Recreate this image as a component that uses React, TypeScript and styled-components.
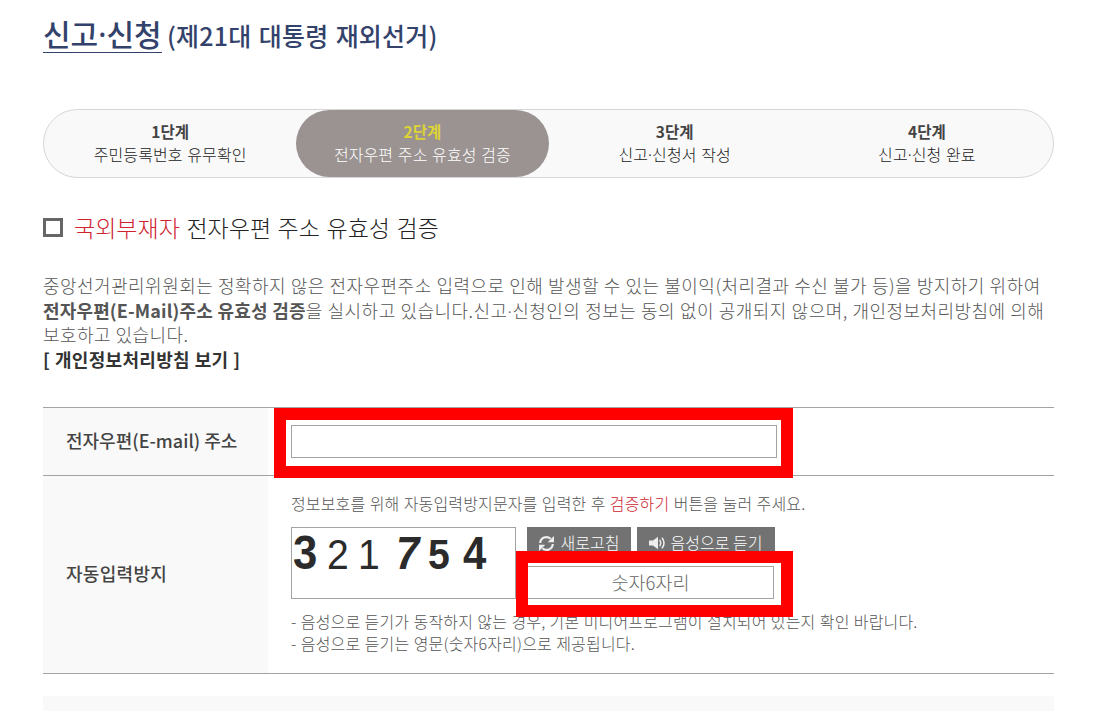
import React from "react";
import styled, { createGlobalStyle } from "styled-components";

const GlobalStyle = createGlobalStyle`
  * {
    box-sizing: border-box;
  }
  body {
    margin: 0;
    background: #fff;
    font-family: "Noto Sans CJK KR", sans-serif;
    overflow: hidden;
  }
`;

const Page = styled.main`
  width: 1095px;
  height: 711px;
  padding: 0 41px 0 43px;
  overflow: hidden;
`;

const Title = styled.h1`
  display: flex;
  align-items: baseline;
  gap: 5px;
  height: 53px;
  margin: 0;
  padding-top: 15px;
  color: #33426b;
  font-weight: 500;
  white-space: nowrap;
`;

const TitleMain = styled.span`
  width: 119px;
  height: 38px;
  border-bottom: 1px solid #33426b;
  font-size: 30px;
  line-height: 36px;
`;

const TitleSub = styled.span`
  font-size: 25px;
  line-height: 36px;
  letter-spacing: 0.2px;
  word-spacing: 1.5px;
`;

/* The middle dot is set narrower than the Korean font draws it */
const Dot = styled.span`
  font-family: "Noto Sans", sans-serif;
  line-height: 0;
`;

const Steps = styled.ol`
  display: flex;
  width: 1011px;
  height: 69px;
  margin: 56px 0 0;
  padding: 0;
  border: 1px solid #d6d6d6;
  border-radius: 35px;
  background: #f9f9f9;
  list-style: none;
`;

const Step = styled.li<{ $active?: boolean }>`
  flex: 1;
  padding-top: 10px;
  border-radius: 34px;
  background: ${(props) => (props.$active ? "#9a9392" : "transparent")};
  color: ${(props) => (props.$active ? "#fff" : "#222")};
  font-size: 16px;
  font-weight: 300;
  line-height: 23px;
  letter-spacing: 0.1px;
  word-spacing: 1px;
  text-align: center;
  white-space: nowrap;
`;

const StepName = styled.strong<{ $active?: boolean }>`
  display: block;
  color: ${(props) => (props.$active ? "#ddd335" : "#444")};
  font-size: 15.5px;
  font-weight: 700;
`;

const Heading = styled.h2`
  display: flex;
  align-items: center;
  height: 36px;
  margin: 31px 0 0;
  color: #222;
  font-size: 23px;
  font-weight: 300;
  line-height: 36px;
  word-spacing: 1.5px;
  white-space: pre;
`;

const Square = styled.span`
  width: 20px;
  height: 19px;
  margin: 1px 11px 0 0;
  border: 3px solid #666;
`;

const Red = styled.span`
  color: #d0232f;
`;

const Intro = styled.p`
  margin: 28px 0 0;
  color: #555;
  font-size: 18px;
  font-weight: 300;
  line-height: 24.6px;
  white-space: nowrap;
`;

const Line = styled.span<{ $spacing: number; $word?: number }>`
  display: block;
  letter-spacing: ${(props) => props.$spacing}px;
  word-spacing: ${(props) => props.$word || 0}px;
`;

const Strong = styled.strong<{ $color?: string }>`
  color: ${(props) => props.$color || "#555"};
  font-weight: 700;
`;

const MailStrong = styled(Strong)`
  letter-spacing: 0.15px;
`;

const Form = styled.div`
  width: 1011px;
  margin-top: 36px;
  border-top: 1px solid #a3a3a3;
`;

const Row = styled.div<{ $height: number }>`
  display: flex;
  height: ${(props) => props.$height}px;
  border-bottom: 1px solid #a3a3a3;
`;

const Label = styled.div<{ $spacing?: number }>`
  display: flex;
  align-items: center;
  flex: 0 0 225px;
  padding: 0 0 3px 23px;
  background: #f9f9f9;
  color: #444;
  font-size: 18px;
  font-weight: 500;
  letter-spacing: ${(props) => props.$spacing || 0}px;
  white-space: nowrap;
`;

const Cell = styled.div`
  position: relative;
  flex: 1;
  padding: 17px 0 0 23px;
`;

const EmailInput = styled.input`
  display: block;
  width: 486px;
  height: 33px;
  padding: 0 10px;
  border: 1px solid #a3a3a3;
  outline: none;
  background: #fff;
`;

/* Red frame that marks the fields to be filled in */
const Highlight = styled.div<{
  $left: number;
  $top: number;
  $width: number;
  $height: number;
}>`
  position: absolute;
  left: ${(props) => props.$left}px;
  top: ${(props) => props.$top}px;
  width: ${(props) => props.$width}px;
  height: ${(props) => props.$height}px;
  border: 12px solid #f00;
  pointer-events: none;
  z-index: 1;
`;

const Note = styled.p<{ $spacing: number }>`
  margin: 0;
  color: #555;
  font-size: 16px;
  font-weight: 300;
  line-height: 22px;
  letter-spacing: ${(props) => props.$spacing}px;
  word-spacing: 0.6px;
  white-space: nowrap;
`;

const CaptchaGuide = styled(Note)`
  margin-top: -1px;
`;

const CaptchaArea = styled.div`
  display: flex;
  gap: 11px;
  margin: 13px 0 11px;
`;

const CaptchaImage = styled.div`
  display: flex;
  align-items: baseline;
  width: 225px;
  height: 72px;
  border: 1px solid #a3a3a3;
  color: #2b2b2b;
  font-family: "Liberation Sans", sans-serif;
  line-height: 50px;
`;

const Digit = styled.span<{
  $size: number;
  $gap: number;
  $bold?: boolean;
  $italic?: boolean;
}>`
  margin-left: ${(props) => props.$gap}px;
  font-size: ${(props) => props.$size}px;
  font-weight: ${(props) => (props.$bold ? 700 : 400)};
  font-style: ${(props) => (props.$italic ? "italic" : "normal")};
  transform: scaleX(0.91);
  transform-origin: left;
`;

const Controls = styled.div`
  display: flex;
  flex-direction: column;
  gap: 7px;
`;

const Buttons = styled.div`
  display: flex;
  gap: 6px;
`;

const Button = styled.button<{ $width: number; $gap: number }>`
  display: flex;
  align-items: center;
  justify-content: center;
  gap: ${(props) => props.$gap}px;
  width: ${(props) => props.$width}px;
  height: 32px;
  padding: 0 1px 0 0;
  border: 0;
  background: #727272;
  color: #fff;
  font-family: inherit;
  font-size: 16px;
  font-weight: 300;
  line-height: 28px;
  white-space: nowrap;
`;

const ButtonText = styled.span`
  position: relative;
  top: -1px;
`;

const CodeInput = styled.input`
  width: 247px;
  height: 33px;
  padding: 0 0 1px;
  border: 1px solid #a3a3a3;
  outline: none;
  font-family: inherit;
  font-size: 18.5px;
  font-weight: 300;
  text-align: center;

  &::placeholder {
    color: #666;
  }
`;

const BottomBar = styled.div`
  width: 1011px;
  height: 15px;
  margin-top: 22px;
  background: #f9f9f9;
`;

const RefreshIcon = () => {
  return (
    <svg width="17" height="17" viewBox="0 0 17 17" fill="none">
      <path
        d="M2.2 8A6.2 6.2 0 0 1 12.6 3.8M14.8 9A6.2 6.2 0 0 1 4.4 13.2"
        stroke="#eee"
        strokeWidth="2.2"
      />
      <path d="M16 1v6.3H9.7ZM1 16V9.7h6.3Z" fill="#eee" />
    </svg>
  );
};

const SpeakerIcon = () => {
  return (
    <svg width="18" height="14" viewBox="0 0 18 14" fill="none">
      <path d="M0 4.5h4L9 0.8v12.4L4 9.5H0Z" fill="#eee" />
      <path
        d="M11 4.4q1.6 2.6 0 5.2M13.3 2.2q3.4 4.8 0 9.6"
        stroke="#eee"
        strokeWidth="1.5"
        strokeLinecap="round"
      />
    </svg>
  );
};

const steps = [
  { name: "1단계", text: ["주민등록번호 유무확인"] },
  { name: "2단계", text: ["전자우편 주소 유효성 검증"], active: true },
  { name: "3단계", text: ["신고", "신청서 작성"] },
  { name: "4단계", text: ["신고", "신청 완료"] },
];

const App: React.FC = () => {
  return (
    <Page>
      <GlobalStyle />
      <Title>
        <TitleMain>
          신고<Dot>·</Dot>신청
        </TitleMain>
        <TitleSub>(제21대 대통령 재외선거)</TitleSub>
      </Title>

      <Steps>
        {steps.map((step) => (
          <Step key={step.name} $active={step.active}>
            <StepName $active={step.active}>{step.name}</StepName>
            {step.text[0]}
            {step.text[1] && <Dot>·</Dot>}
            {step.text[1]}
          </Step>
        ))}
      </Steps>

      <Heading>
        <Square />
        <Red>국외부재자</Red> 전자우편 주소 유효성 검증
      </Heading>

      <Intro>
        <Line $spacing={0.46} $word={0.3}>
          중앙선거관리위원회는 정확하지 않은 전자우편주소 입력으로 인해 발생할 수
          있는 불이익(처리결과 수신 불가 등)을 방지하기 위하여
        </Line>
        <Line $spacing={0.45} $word={0.4}>
          <MailStrong>전자우편(E-Mail)주소 유효성 검증</MailStrong>을 실시하고
          있습니다.신고<Dot>·</Dot>신청인의 정보는 동의 없이 공개되지 않으며,
          개인정보처리방침에 의해
        </Line>
        <Line $spacing={0.4} $word={0.4}>
          보호하고 있습니다.
        </Line>
        <Line $spacing={0.3} $word={0.5}>
          <Strong $color="#333">[ 개인정보처리방침 보기 ]</Strong>
        </Line>
      </Intro>

      <Form>
        <Row $height={68}>
          <Label>전자우편(E-mail) 주소</Label>
          <Cell>
            <EmailInput />
            <Highlight $left={6} $top={0} $width={519} $height={70} />
          </Cell>
        </Row>
        <Row $height={198}>
          <Label $spacing={0.3}>자동입력방지</Label>
          <Cell>
            <CaptchaGuide $spacing={0.15}>
              정보보호를 위해 자동입력방지문자를 입력한 후 <Red>검증하기</Red>{" "}
              버튼을 눌러 주세요.
            </CaptchaGuide>
            <CaptchaArea>
              <CaptchaImage>
                <Digit $size={48} $gap={1} $bold>3</Digit>
                <Digit $size={43} $gap={7}>2</Digit>
                <Digit $size={43} $gap={7.5}>1</Digit>
                <Digit $size={46} $gap={14} $bold $italic>7</Digit>
                <Digit $size={43} $gap={6.4} $bold>5</Digit>
                <Digit $size={46} $gap={10.6} $bold>4</Digit>
              </CaptchaImage>
              <Controls>
                <Buttons>
                  <Button $width={104} $gap={6}>
                    <RefreshIcon />
                    <ButtonText>새로고침</ButtonText>
                  </Button>
                  <Button $width={138} $gap={4}>
                    <SpeakerIcon />
                    <ButtonText>음성으로 듣기</ButtonText>
                  </Button>
                </Buttons>
                <CodeInput placeholder="숫자6자리" />
              </Controls>
            </CaptchaArea>
            <Note $spacing={0.16}>
              - 음성으로 듣기가 동작하지 않는 경우, 기본 미디어프로그램이 설치되어
              있는지 확인 바랍니다.
            </Note>
            <Note $spacing={0.17}>
              - 음성으로 듣기는 영문(숫자6자리)으로 제공됩니다.
            </Note>
            <Highlight $left={248} $top={75} $width={277} $height={66} />
          </Cell>
        </Row>
      </Form>
      <BottomBar />
    </Page>
  );
};

export default App;
